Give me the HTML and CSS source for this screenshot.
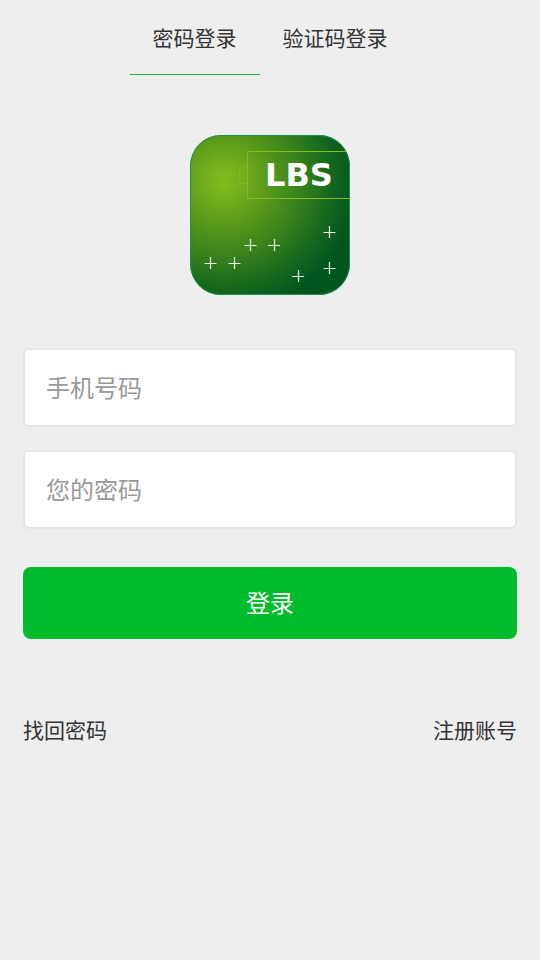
FILE: index.html
```html
<!DOCTYPE html>
<html lang="zh-CN">
<head>
<meta charset="utf-8">
<meta name="viewport" content="width=device-width, initial-scale=1">
<title>密码登录</title>
<link rel="stylesheet" href="styles.css">
</head>
<body>
<nav class="tabs">
  <a class="tab tab-active" href="#password">密码登录</a>
  <a class="tab" href="#code">验证码登录</a>
</nav>
<main class="login">
  <svg class="logo" viewBox="0 0 160 160" role="img" aria-label="LBS">
    <defs>
      <radialGradient id="glow" gradientUnits="userSpaceOnUse" cx="34" cy="46" r="132">
        <stop offset="0" stop-color="#86bd1b"/>
        <stop offset=".25" stop-color="#65a31c"/>
        <stop offset=".55" stop-color="#3b841c"/>
        <stop offset=".8" stop-color="#17691e"/>
        <stop offset="1" stop-color="#00551e"/>
      </radialGradient>
      <clipPath id="tile"><rect width="160" height="160" rx="31"/></clipPath>
    </defs>
    <g clip-path="url(#tile)">
      <rect width="160" height="160" fill="url(#glow)"/>
      <rect x=".5" y=".5" width="159" height="159" rx="30.5" fill="none" stroke="#169447"/>
      <path d="M57.5 31.500H53.500Q49.500 31.500 49.500 36V44Q49.500 48.500 53.500 48.500H57.500" fill="none" stroke="#8cc220" stroke-opacity=".6"/>
      <path d="M162 16.500H57.500V63.500H162" fill="none" stroke="#83bd20"/>
      <path d="M14.500 128.500h12M20.500 122v12M38.500 128.500h12M44.500 122v12M54.500 110.500h12M60.500 104v12M78 110.500h12M84.500 104v12M133.500 97.500h12M139.500 91v12M133.500 133.500h12M139.500 127v12M102 141.500h12M108.500 135v12" fill="none" stroke="#f0ffe8" stroke-width="1.200"/>
      <text class="logo-text" x="109" y="51" text-anchor="middle">LBS</text>
    </g>
  </svg>
  <form class="form">
    <input class="field" type="tel" placeholder="手机号码" aria-label="手机号码">
    <input class="field" type="password" placeholder="您的密码" aria-label="您的密码">
    <button class="submit" type="submit">登录</button>
  </form>
  <div class="links">
    <a href="#recover">找回密码</a>
    <a href="#register">注册账号</a>
  </div>
</main>
</body>
</html>
```
FILE: styles.css
```css
* {
  box-sizing: border-box;
}

body {
  margin: 0;
  min-height: 100vh;
  background: #eeeeee;
  color: #333333;
  font-family: "Noto Sans CJK SC", sans-serif;
  font-size: 21px;
}

a {
  color: inherit;
  text-decoration: none;
}

.tabs {
  display: flex;
  justify-content: center;
}

.tab {
  padding: 0 23px;
  line-height: 74px;
  border-bottom: 1px solid transparent;
}

.tab-active {
  border-bottom-color: #12b83c;
}

.login {
  display: flex;
  flex-direction: column;
  padding: 60px 23px;
}

.logo {
  align-self: center;
  width: 160px;
  height: 160px;
}

.logo-text {
  fill: #ffffff;
  font-family: "DejaVu Sans", sans-serif;
  font-size: 32px;
  font-weight: bold;
}

.form {
  display: flex;
  flex-direction: column;
  gap: 23px;
  margin-top: 53px;
}

.field {
  width: 100%;
  height: 79px;
  padding: 0 21px 2px;
  border: 2px solid #e5e5e5;
  border-radius: 6px;
  background: #ffffff;
  color: #333333;
  font: inherit;
  font-size: 24px;
}

.field::placeholder {
  color: #999999;
}

.submit {
  height: 72px;
  margin-top: 15px;
  padding: 0 0 4px;
  border: 0;
  border-radius: 8px;
  background: #00bc2c;
  color: #ffffff;
  font: inherit;
  font-size: 24px;
}

.links {
  display: flex;
  justify-content: space-between;
  margin-top: 74px;
  line-height: 32px;
}
```
